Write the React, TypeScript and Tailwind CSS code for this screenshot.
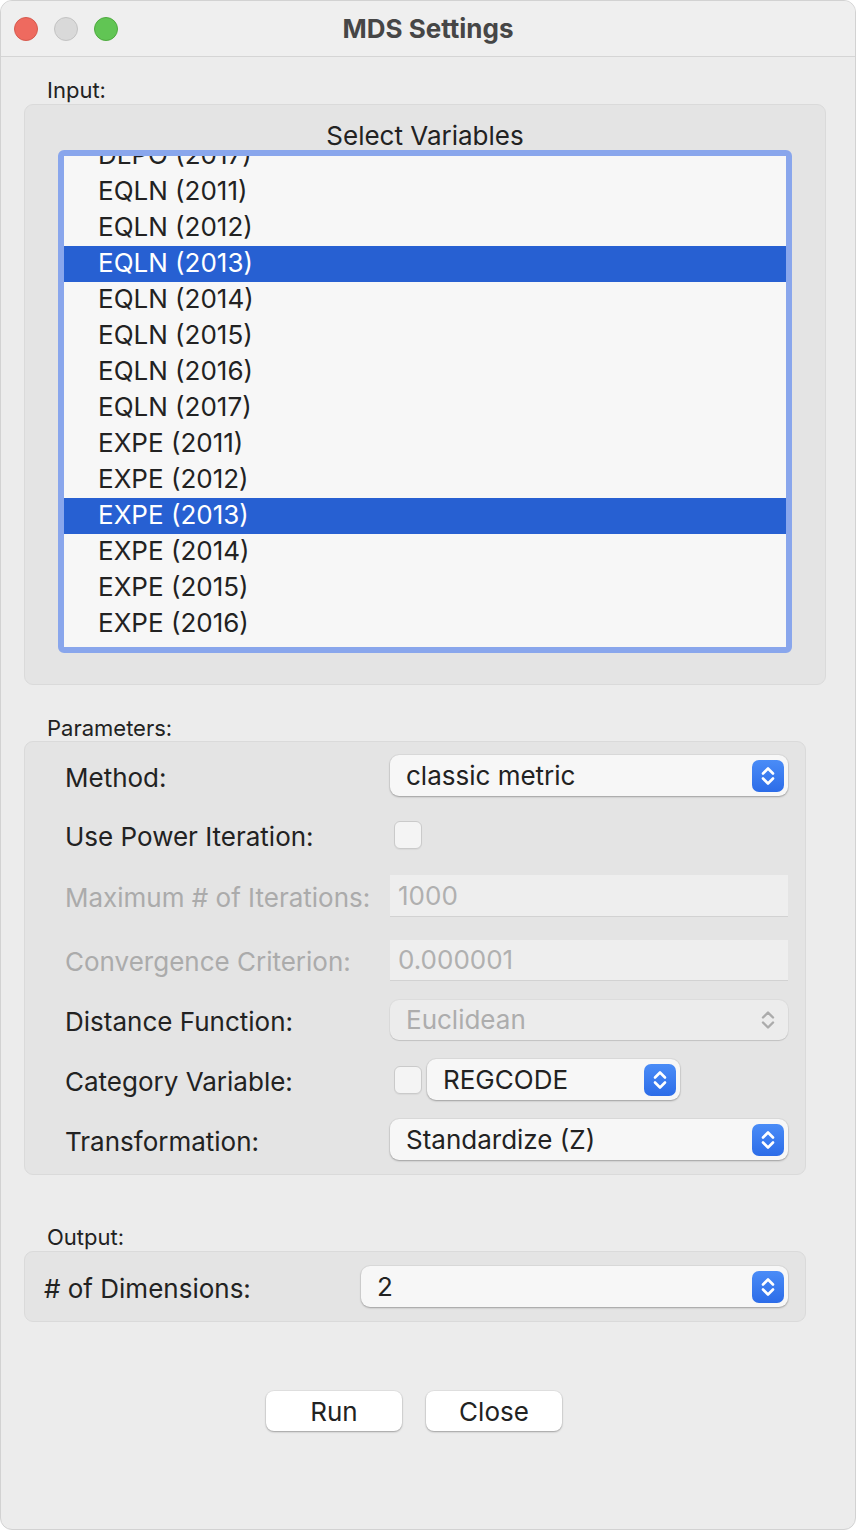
import React from 'react';

const FONT = { fontFamily: 'Inter, "Noto Sans", "Liberation Sans", sans-serif' };

const ITEMS = [
  'DLPO (2017)',
  'EQLN (2011)', 'EQLN (2012)', 'EQLN (2013)', 'EQLN (2014)', 'EQLN (2015)', 'EQLN (2016)', 'EQLN (2017)',
  'EXPE (2011)', 'EXPE (2012)', 'EXPE (2013)', 'EXPE (2014)', 'EXPE (2015)', 'EXPE (2016)',
];
const SELECTED = ['EQLN (2013)', 'EXPE (2013)'];

function Stepper() {
  return (
    <div className="w-[32px] h-[32px] rounded-[7px] bg-gradient-to-b from-[#4a8cf7] to-[#2c6ce8] flex items-center justify-center shrink-0">
      <svg width="32" height="32" viewBox="0 0 32 32" fill="none" stroke="white" strokeWidth="2.6" strokeLinecap="round" strokeLinejoin="round">
        <path d="M11 13.5 L16 8.5 L21 13.5" />
        <path d="M11 18.5 L16 23.5 L21 18.5" />
      </svg>
    </div>
  );
}

function GreyChevrons() {
  return (
    <svg width="32" height="32" viewBox="0 0 32 32" fill="none" stroke="#ababab" strokeWidth="2.4" strokeLinecap="round" strokeLinejoin="round">
      <path d="M11 13.5 L16 8.5 L21 13.5" />
      <path d="M11 18.5 L16 23.5 L21 18.5" />
    </svg>
  );
}

function Popup({ value, className = '' }: { value: string; className?: string }) {
  return (
    <div className={`h-[41px] rounded-[9px] bg-[#f7f7f7] shadow-[0_1px_2px_rgba(0,0,0,0.28),0_0_0_1px_rgba(0,0,0,0.04)] flex items-center pl-[16px] pr-[4px] ${className}`}>
      <span className="flex-1 text-[26px] text-[#222]">{value}</span>
      <Stepper />
    </div>
  );
}

function Checkbox() {
  return <div className="w-[28px] h-[28px] rounded-[6px] bg-[#f4f4f4] border border-[#cacaca] shadow-[0_1px_1px_rgba(0,0,0,0.05)] shrink-0" />;
}

function Row({ label, disabled, children, className = '' }: { label: string; disabled?: boolean; children: React.ReactNode; className?: string }) {
  return (
    <div className={`flex items-center h-[41px] ${className}`}>
      <div className={`w-[325px] shrink-0 text-[26px] pt-[3px] ${disabled ? 'text-[#ababab]' : 'text-[#222]'}`}>{label}</div>
      <div className="flex-1 flex items-center">{children}</div>
    </div>
  );
}

export default function App() {
  return (
    <div className="w-[856px] h-[1530px] bg-white" style={FONT}>
      <div className="w-full h-full rounded-[12px] overflow-hidden bg-[#ececec] border border-[#d2d2d2]">
        {/* Title bar */}
        <div className="h-[56px] bg-[#efefef] border-b border-[#d5d5d5] grid grid-cols-[1fr_auto_1fr] items-center">
          <div className="flex items-center gap-[16px] pl-[13px]">
            <span className="w-[24px] h-[24px] rounded-full bg-[#ee6a5f] border border-[#d65a4e]" />
            <span className="w-[24px] h-[24px] rounded-full bg-[#d9d9d9] border border-[#c3c3c3]" />
            <span className="w-[24px] h-[24px] rounded-full bg-[#61c554] border border-[#4eaa3f]" />
          </div>
          <div className="text-[26px] font-bold text-[#464646]">MDS Settings</div>
          <div />
        </div>

        <div className="px-[23px]">
          {/* Input */}
          <div className="mt-[21px] pl-[23px] h-[24px] leading-[24px] text-[22px] text-[#222]">Input:</div>
          <div className="mt-[2px] w-[802px] rounded-[9px] bg-[#e4e4e4] border border-[#dadada] pt-[17px] pb-[31px] px-[33px]">
            <div className="h-[28px] leading-[28px] text-center text-[26px] text-[#222]">Select Variables</div>
            <div className="rounded-[6px] border-[6px] border-[#89a6ec]">
              <div className="h-[491px] overflow-hidden bg-[#f7f7f7]">
                <div className="-mt-[18px]">
                  {ITEMS.map(it => {
                    const sel = SELECTED.includes(it);
                    return (
                      <div key={it} className={`h-[36px] flex items-center pl-[34px] pb-[3px] text-[26px] ${sel ? 'bg-[#2760d2] text-white' : 'text-[#222]'}`}>
                        {it}
                      </div>
                    );
                  })}
                </div>
              </div>
            </div>
          </div>

          {/* Parameters */}
          <div className="mt-[31px] pl-[23px] h-[24px] leading-[24px] text-[22px] text-[#222]">Parameters:</div>
          <div className="mt-[1px] w-[782px] rounded-[9px] bg-[#e4e4e4] border border-[#dadada] pt-[13px] pb-[14px] pl-[40px] pr-[17px]">
            <Row label="Method:">
              <Popup value="classic metric" className="w-full" />
            </Row>
            <Row label="Use Power Iteration:" className="mt-[18px]">
              <div className="pl-[4px]"><Checkbox /></div>
            </Row>
            <Row label="Maximum # of Iterations:" disabled className="mt-[20px]">
              <div className="w-full h-[41px] bg-[#eeeeee] shadow-[0_1px_0_rgba(0,0,0,0.08)] flex items-center pl-[8px] text-[26px] text-[#b0b0b0]">1000</div>
            </Row>
            <Row label="Convergence Criterion:" disabled className="mt-[23px]">
              <div className="w-full h-[40px] bg-[#eeeeee] shadow-[0_1px_0_rgba(0,0,0,0.08)] flex items-center pl-[8px] text-[26px] text-[#b0b0b0]">0.000001</div>
            </Row>
            <Row label="Distance Function:" className="mt-[19px]">
              <div className="w-full h-[40px] rounded-[9px] bg-[#ececec] shadow-[0_1px_1px_rgba(0,0,0,0.12),0_0_0_1px_rgba(0,0,0,0.03)] flex items-center pl-[16px] pr-[4px]">
                <span className="flex-1 text-[26px] text-[#adadad]">Euclidean</span>
                <GreyChevrons />
              </div>
            </Row>
            <Row label="Category Variable:" className="mt-[19px]">
              <div className="flex items-center gap-[5px] pl-[4px]">
                <Checkbox />
                <Popup value="REGCODE" className="w-[253px] h-[40px]" />
              </div>
            </Row>
            <Row label="Transformation:" className="mt-[19px]">
              <Popup value="Standardize (Z)" className="w-full h-[40px]" />
            </Row>
          </div>

          {/* Output */}
          <div className="mt-[50px] pl-[23px] h-[24px] leading-[24px] text-[22px] text-[#222]">Output:</div>
          <div className="mt-[2px] w-[782px] rounded-[9px] bg-[#e4e4e4] border border-[#dadada] py-[13px] pl-[19px] pr-[17px] flex items-center">
            <div className="w-[317px] shrink-0 text-[26px] text-[#222] pt-[4px]">{'# of Dimensions:'}</div>
            <Popup value="2" className="flex-1 h-[40px]" />
          </div>

          {/* Buttons */}
          <div className="mt-[69px] flex justify-center gap-[24px] pr-[28px]">
            <button className="w-[136px] h-[40px] rounded-[8px] bg-white shadow-[0_1px_2px_rgba(0,0,0,0.3),0_0_0_1px_rgba(0,0,0,0.04)] text-[26px] text-[#222]">Run</button>
            <button className="w-[136px] h-[40px] rounded-[8px] bg-white shadow-[0_1px_2px_rgba(0,0,0,0.3),0_0_0_1px_rgba(0,0,0,0.04)] text-[26px] text-[#222]">Close</button>
          </div>
        </div>
      </div>
    </div>
  );
}
